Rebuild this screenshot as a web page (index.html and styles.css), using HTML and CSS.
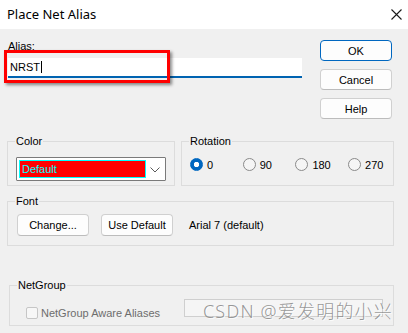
FILE: index.html
```html
<!DOCTYPE html>
<html lang="en">
<head>
  <meta charset="UTF-8">
  <title>Place Net Alias</title>
  <link rel="stylesheet" href="styles.css">
</head>
<body>
  <div class="window">
    <div class="titlebar">
      <span class="title">Place Net Alias</span>
      <svg class="close" width="11" height="11" viewBox="0 0 11 11">
        <path d="M0.5 0.5 L10.5 10.5 M10.5 0.5 L0.5 10.5" stroke="#1a1a1a" stroke-width="1.1" fill="none"/>
      </svg>
    </div>

    <div class="content">
      <!-- Alias + buttons -->
      <div class="top">
        <div class="alias">
          <div class="alias-label">Alias:</div>
          <div class="alias-input">NRST<span class="caret"></span></div>
        </div>
        <div class="actions">
          <button class="btn btn-default">OK</button>
          <button class="btn">Cancel</button>
          <button class="btn">Help</button>
        </div>
      </div>

      <!-- Color / Rotation -->
      <div class="row">
        <fieldset class="group group-color">
          <legend>Color</legend>
          <div class="combo">
            <span class="combo-value">Default</span>
            <svg class="chevron" width="10" height="6" viewBox="0 0 10 6">
              <polyline points="0.5,0.5 5,5 9.5,0.5" stroke="#5a5a5a" stroke-width="1" fill="none"/>
            </svg>
          </div>
        </fieldset>
        <fieldset class="group group-rotation">
          <legend>Rotation</legend>
          <div class="radios">
            <label class="radio checked"><span class="radio-mark"></span>0</label>
            <label class="radio"><span class="radio-mark"></span>90</label>
            <label class="radio"><span class="radio-mark"></span>180</label>
            <label class="radio"><span class="radio-mark"></span>270</label>
          </div>
        </fieldset>
      </div>

      <!-- Font -->
      <fieldset class="group group-font">
        <legend>Font</legend>
        <div class="font-row">
          <button class="btn btn-font">Change...</button>
          <button class="btn btn-font">Use Default</button>
          <span class="font-name">Arial 7 (default)</span>
        </div>
      </fieldset>

      <!-- NetGroup -->
      <fieldset class="group group-net">
        <legend>NetGroup</legend>
        <div class="net-row">
          <label class="check"><span class="check-box"></span>NetGroup Aware Aliases</label>
          <div class="net-edit"></div>
        </div>
      </fieldset>
    </div>

    <div class="highlight"></div>
    <div class="watermark">CSDN @爱发明的小兴</div>
  </div>
</body>
</html>
```

FILE: styles.css
```css
body {
  margin: 0;
  font-family: "Liberation Sans", Arial, sans-serif;
  font-size: 11px;
  color: #000;
}

.window {
  position: relative;
  width: 408px;
  height: 333px;
  background-color: #f0f0f0;
  overflow: hidden;
}

.titlebar {
  height: 29px;
  background-color: #fff;
  display: flex;
  align-items: center;
  justify-content: space-between;
  padding: 0 6px 2px 7px;
  box-sizing: border-box;
}

.title {
  font-family: "Noto Sans", sans-serif;
  font-size: 13px;
  color: #000;
}

.close {
  margin-top: 1px;
}

.content {
  padding: 11px 14px 0 7px;
}

.top {
  display: flex;
  justify-content: space-between;
}

.alias {
  width: 294px;
  margin-left: 1px;
}

.alias-label {
  line-height: 13px;
  height: 13px;
}

.alias-input {
  margin-top: 5px;
  height: 20px;
  box-sizing: border-box;
  background-color: #fff;
  border-bottom: 2px solid #0063b1;
  padding-left: 2px;
  line-height: 18px;
  display: flex;
  align-items: center;
}

.caret {
  display: inline-block;
  width: 1px;
  height: 12px;
  background-color: #000;
  margin-left: 1px;
}

.actions {
  display: flex;
  flex-direction: column;
  gap: 8px;
  margin-right: 2px;
}

.btn {
  width: 72px;
  height: 21px;
  padding: 0;
  font-family: "Liberation Sans", Arial, sans-serif;
  font-size: 11px;
  color: #000;
  background-color: #fdfdfd;
  border: 1px solid #d0d0d0;
  border-bottom-color: #bcbcbc;
  border-radius: 4px;
  box-sizing: border-box;
}

.btn-default {
  border: 1px solid #0067c0;
}

.row {
  display: flex;
  gap: 6px;
  margin-top: 16px;
}

.group {
  margin: 0;
  min-width: 0;
  border: 1px solid #dcdcdc;
  box-sizing: border-box;
}

.group legend {
  padding: 0 1px;
  line-height: 13px;
}

.group-color {
  width: 168px;
  padding: 9px 8px 4px 8px;
}

.group-color legend,
.group-rotation legend {
  margin-left: -1px;
}

.combo {
  width: 150px;
  height: 24px;
  box-sizing: border-box;
  border: 1px solid #7a7a7a;
  border-radius: 1px;
  background-color: #fff;
  padding: 2px;
  display: flex;
  align-items: center;
  justify-content: space-between;
}

.combo-value {
  width: 127px;
  height: 18px;
  box-sizing: border-box;
  border: 1px solid #00ffff;
  background-color: #ff0000;
  color: #00ffff;
  padding-left: 2px;
  line-height: 16px;
}

.chevron {
  margin-right: 3px;
  margin-top: 1px;
}

.group-rotation {
  width: 213px;
  padding: 10px 8px 4px 8px;
  overflow: visible;
}

.radios {
  display: flex;
}

.radio {
  flex: 0 0 52.7px;
  display: flex;
  align-items: center;
  gap: 4px;
  height: 13px;
}

.radio-mark {
  width: 13px;
  height: 13px;
  box-sizing: border-box;
  border-radius: 50%;
  border: 1px solid #8a8a8a;
  background-color: #f5f5f5;
}

.radio.checked .radio-mark {
  border-color: #0067c0;
  background: radial-gradient(circle, #fff 0 2.4px, #0067c0 3px);
}

.group-font {
  margin-top: 9px;
  width: 387px;
  padding: 6px 8px 9px 9px;
}

.group-font legend {
  margin-left: -2px;
}

.font-row {
  display: flex;
  align-items: center;
}

.btn-font {
  height: 22px;
  margin-right: 12px;
}

.font-name {
  margin-left: 4px;
}

.group-net {
  margin: 33px 0 0 2px;
  width: 385px;
  padding: 0 10px 6px 16px;
}

.group-net legend {
  margin-left: -9px;
}

.net-row {
  display: flex;
  align-items: flex-start;
  justify-content: space-between;
}

.check {
  display: flex;
  align-items: center;
  gap: 3px;
  margin-top: 15px;
  color: #6d6d6d;
}

.check-box {
  width: 12px;
  height: 12px;
  box-sizing: border-box;
  border: 1px solid #c6c6c6;
  border-radius: 2px;
  background-color: #f7f7f7;
}

.net-edit {
  width: 199px;
  height: 18px;
  margin-top: 7px;
  box-sizing: border-box;
  border: 1px solid #cfcfcf;
  background-color: #f5f5f5;
}

/* screenshot markup laid over the dialog */
.highlight {
  position: absolute;
  left: 4px;
  top: 50px;
  width: 166px;
  height: 33px;
  box-sizing: border-box;
  border: 3px solid #ff0000;
  box-shadow: 2px 2px 3px rgba(0, 0, 0, 0.45);
}

.watermark {
  position: absolute;
  right: 15px;
  top: 299px;
  font-family: "Noto Sans", "Noto Sans CJK SC", sans-serif;
  font-size: 18px;
  font-weight: 300;
  letter-spacing: 1.2px;
  line-height: 24px;
  color: rgba(125, 125, 125, 0.8);
  text-shadow: 1px 1px 0 rgba(255, 255, 255, 0.8);
}
```
